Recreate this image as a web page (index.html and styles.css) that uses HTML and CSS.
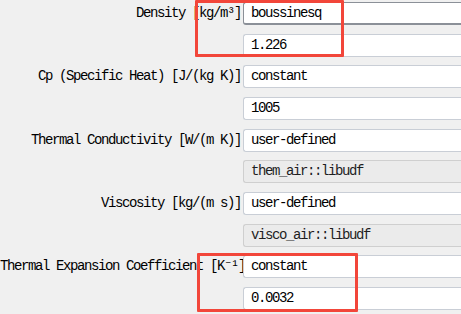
FILE: index.html
```html
<!DOCTYPE html>
<html lang="en">
<head>
    <meta charset="UTF-8" />
    <meta name="viewport" content="width=device-width, initial-scale=1.0" />
    <title>Material Properties</title>
    <link rel="stylesheet" href="styles.css">
</head>
<body>
    <div class="panel">
        <div class="form">
            <div class="label">Density [kg/m³]</div>
            <div class="field combo">boussinesq</div>
            <div class="field sub">1.226</div>

            <div class="label">Cp (Specific Heat) [J/(kg K)]</div>
            <div class="field">constant</div>
            <div class="field sub">1005</div>

            <div class="label">Thermal Conductivity [W/(m K)]</div>
            <div class="field">user-defined</div>
            <div class="field sub disabled">them_air::libudf</div>

            <div class="label">Viscosity [kg/(m s)]</div>
            <div class="field">user-defined</div>
            <div class="field sub disabled">visco_air::libudf</div>

            <div class="label">Thermal Expansion Coefficient [K⁻¹]</div>
            <div class="field">constant</div>
            <div class="field sub">0.0032</div>
        </div>

        <div class="mark mark-density"></div>
        <div class="mark mark-expansion"></div>
    </div>
</body>
</html>
```

FILE: styles.css
```css
body {
    margin: 0;
    background: #f0f0f0;
    font-family: "Liberation Mono", "DejaVu Sans Mono", monospace;
    font-size: 14px;
    letter-spacing: -1.4px;
    color: #000;
    overflow: hidden;
}

.panel {
    position: relative;
    height: 314px;
}

.form {
    display: grid;
    grid-template-columns: 241px 1fr;
    column-gap: 2px;
    row-gap: 8.67px;
    padding-top: 2px;
}

.label {
    grid-column: 1;
    text-align: right;
    white-space: nowrap;
    line-height: 23px;
}

/* fields run on past the right edge of the window */
.field {
    grid-column: 2;
    box-sizing: border-box;
    height: 23px;
    line-height: 21px;
    padding: 0 7px;
    background: #ffffff;
    border: 1px solid #c9ced6;
    border-right: none;
    border-radius: 3px 0 0 3px;
    white-space: nowrap;
    overflow: hidden;
}

.field.combo {
    border-color: #8b9098;
    border-bottom-width: 2px;
    line-height: 20px;
}

.field.disabled {
    background: #ebebeb;
    border-color: #cfcfcf;
    color: #1e1e1e;
}

/* red annotation boxes drawn over the form */
.mark {
    position: absolute;
    border: 3px solid #f2463a;
    border-radius: 1px;
}

.mark-density {
    left: 195px;
    top: 0;
    width: 143px;
    height: 51px;
}

.mark-expansion {
    left: 197px;
    top: 253px;
    width: 155px;
    height: 53px;
}
```
